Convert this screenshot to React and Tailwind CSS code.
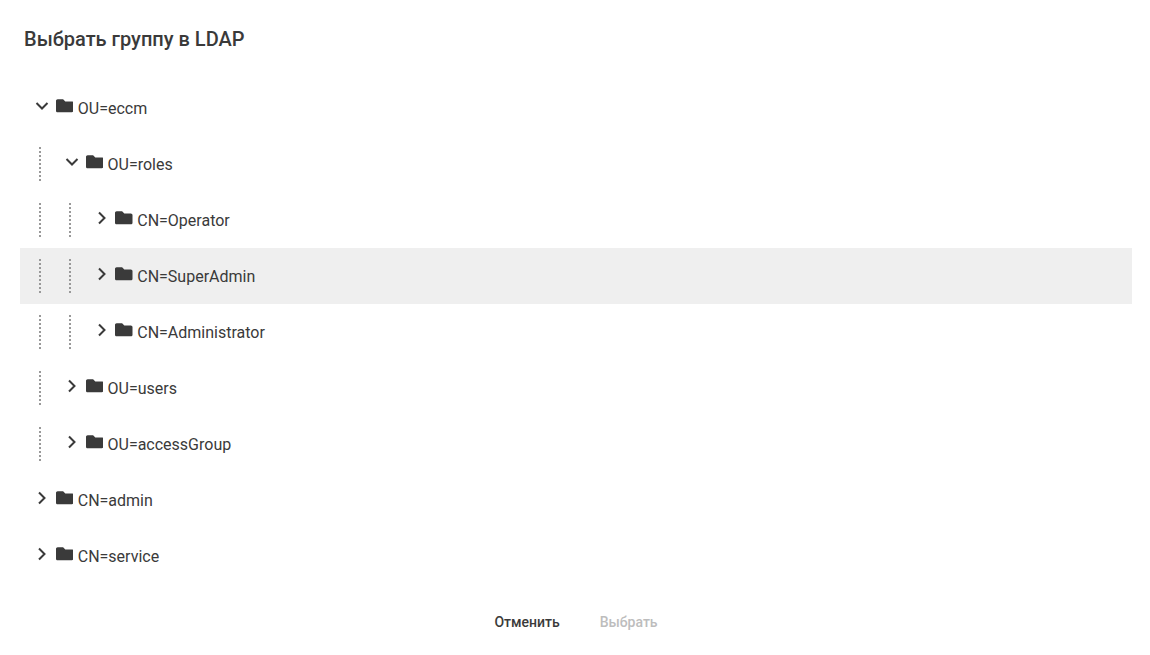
import { FaFolder } from "react-icons/fa";

const NODES = [
  { label: "OU=eccm", depth: 0, open: true },
  { label: "OU=roles", depth: 1, open: true },
  { label: "CN=Operator", depth: 2 },
  { label: "CN=SuperAdmin", depth: 2, selected: true },
  { label: "CN=Administrator", depth: 2 },
  { label: "OU=users", depth: 1 },
  { label: "OU=accessGroup", depth: 1 },
  { label: "CN=admin", depth: 0 },
  { label: "CN=service", depth: 0 },
];

function Chevron({ open }) {
  return (
    <svg className="w-[14px] h-[14px] text-[#3a3a3a]" viewBox="0 0 14 14" fill="none" stroke="currentColor" strokeWidth="2">
      {open ? <path d="M1.5 4 L7 9.5 L12.5 4" /> : <path d="M4 1.5 L9.5 7 L4 12.5" />}
    </svg>
  );
}

function TreeRow({ label, depth, open, selected }) {
  return (
    <div className={`flex items-center h-14 pl-[5px] ${selected ? "bg-[#efefef]" : ""}`}>
      {Array.from({ length: depth }).map((_, i) => (
        <div key={i} className="w-[29.75px] h-[34px] shrink-0 flex justify-center">
          <div className="h-full border-l-2 border-dotted border-[#999999]"></div>
        </div>
      ))}
      <div className="flex items-center ml-[10px] -mt-[4px]">
        <Chevron open={open} />
        <FaFolder className="ml-[6.75px] w-[17.5px] h-[17.5px] text-[#3a3a3a]" />
      </div>
      <span className="ml-[4.5px] mt-[2px] text-base leading-6 text-[#3a3a3a]">{label}</span>
    </div>
  );
}

export default function App() {
  return (
    <div className="w-[1150px] h-[655px] bg-white flex flex-col overflow-hidden font-['Roboto',sans-serif]">
      <h2 className="pl-6 pt-[26px] h-[80px] text-xl leading-[26px] font-medium text-[#3a3a3a]">Выбрать группу в LDAP</h2>
      <div className="ml-5 mr-[18px] flex flex-col">
        {NODES.map((node) => (
          <TreeRow key={node.label} {...node} />
        ))}
      </div>
      <div className="flex justify-center gap-10 mt-[28px] pl-[2px] text-sm leading-5 font-medium">
        <button className="text-[#3a3a3a]">Отменить</button>
        <button className="text-[#bdbdbd]">Выбрать</button>
      </div>
    </div>
  );
}
